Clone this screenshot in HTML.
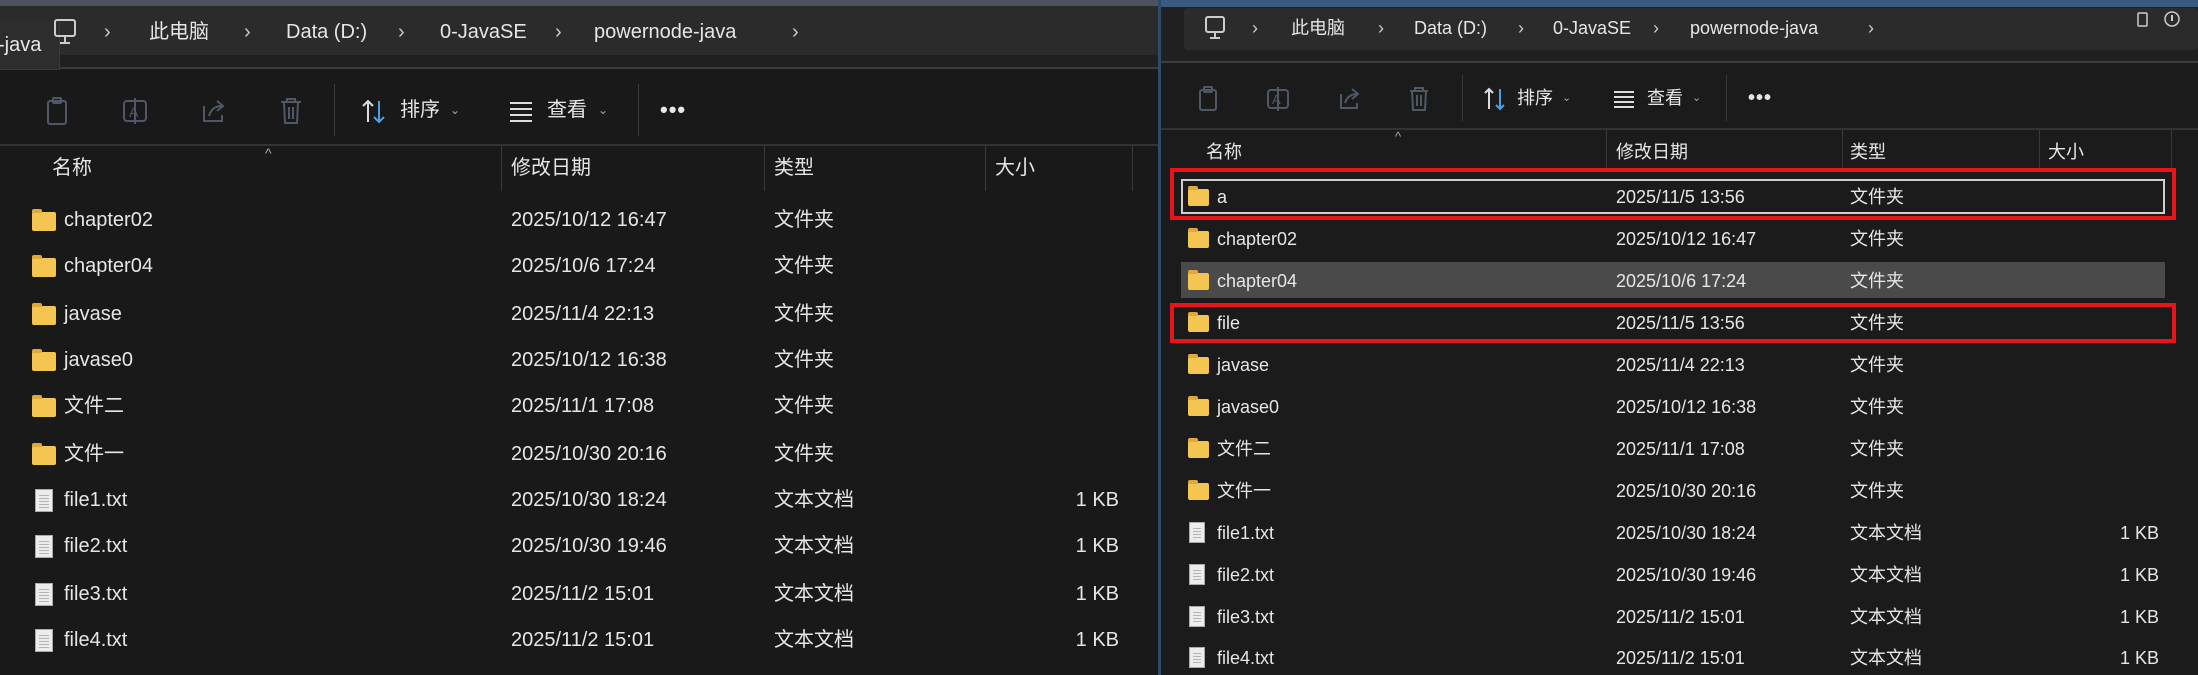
<!DOCTYPE html><html><head><meta charset="utf-8"><style>
*{margin:0;padding:0;box-sizing:border-box}
body{width:2198px;height:675px;background:#191919;position:relative;overflow:hidden;font-family:"Liberation Sans","Noto Sans CJK SC",sans-serif;color:#e6e6e6}
.a{position:absolute;white-space:nowrap}
.L{font-size:20px}.R{font-size:18px}
.t{transform:translateY(-50%);line-height:26px;height:26px}
.fold{position:absolute;width:24px;height:19px;background:#f4c550;border-radius:2px}
.fold:before{content:"";position:absolute;left:0;top:-3px;width:10px;height:4px;background:#e2a93a;border-radius:2px 2px 0 0}
.file{position:absolute;width:18px;height:23px;background:#ececec;border:1px solid #aaa}
.file:after{content:"";position:absolute;left:3px;right:3px;top:3px;bottom:3px;background:repeating-linear-gradient(#ececec 0 2px,#b5b5b5 2px 3px)}
.sep{position:absolute;width:1px;background:#3a3a3a}
</style></head><body>
<!-- LEFT PANE -->
<div class="a" style="left:0;top:0;width:1158px;height:6px;background:#4b5360"></div>
<div class="a" style="left:0;top:6px;width:1158px;height:49px;background:#2b2b2b"></div>
<div class="a" style="left:0;top:55px;width:1158px;height:13px;background:#202020"></div>
<div class="a" style="left:0;top:67px;width:1158px;height:2px;background:#3c3c3c"></div>
<div class="a" style="left:0;top:144px;width:1158px;height:2px;background:#333"></div>
<div class="a" style="left:0;top:20px;width:60px;height:50px;background:#2d2d2d;border-right:1px solid #3a3a3a;border-bottom:1px solid #3a3a3a"></div>
<div class="a L t" style="left:-2px;top:45px;">-java</div>
<svg class="a" style="left:52px;top:18px" width="26" height="28"><rect x="3" y="2" width="20" height="16" rx="2" fill="none" stroke="#ccc" stroke-width="2"/><path d="M13 18v6M8 25h10" stroke="#ccc" stroke-width="2"/></svg>
<div class="a L t" style="left:104px;top:32px;color:#ccc">›</div>
<div class="a L t" style="left:149px;top:32px">此电脑</div>
<div class="a L t" style="left:244px;top:32px;color:#ccc">›</div>
<div class="a L t" style="left:286px;top:32px">Data (D:)</div>
<div class="a L t" style="left:398px;top:32px;color:#ccc">›</div>
<div class="a L t" style="left:440px;top:32px">0-JavaSE</div>
<div class="a L t" style="left:555px;top:32px;color:#ccc">›</div>
<div class="a L t" style="left:594px;top:32px">powernode-java</div>
<div class="a L t" style="left:792px;top:32px;color:#ccc">›</div>
<!-- toolbar left -->
<svg class="a" style="left:44px;top:96px" width="26" height="30"><rect x="4" y="5" width="18" height="23" rx="2" fill="none" stroke="#4f5866" stroke-width="2"/><rect x="9" y="2" width="8" height="5" rx="1" fill="none" stroke="#4f5866" stroke-width="2"/></svg>
<svg class="a" style="left:121px;top:96px" width="28" height="30"><rect x="3" y="5" width="22" height="20" rx="3" fill="none" stroke="#4f5866" stroke-width="2"/><text x="8" y="21" font-size="14" fill="#4f5866">A</text><path d="M14 2v26" stroke="#4f5866" stroke-width="2"/></svg>
<svg class="a" style="left:200px;top:96px" width="28" height="30"><path d="M4 10v15h18v-6M9 20c2-7 7-10 13-10M17 5l6 5-6 5" fill="none" stroke="#4f5866" stroke-width="2"/></svg>
<svg class="a" style="left:278px;top:96px" width="26" height="30"><path d="M3 6h20M9 6V3h8v3M6 6l1 21h12l1-21M11 11v12M15 11v12" fill="none" stroke="#4f5866" stroke-width="2"/></svg>
<div class="sep" style="left:334px;top:84px;height:52px"></div>
<svg class="a" style="left:360px;top:98px" width="28" height="28"><path d="M8 24V3M3 8l5-5 5 5" fill="none" stroke="#ddd" stroke-width="2"/><path d="M19 3v21M14 19l5 5 5-5" fill="none" stroke="#4aa3e0" stroke-width="2"/></svg>
<div class="a L t" style="left:400px;top:110px">排序</div>
<div class="a t" style="left:450px;top:110px;font-size:12px;color:#aaa">⌄</div>
<svg class="a" style="left:508px;top:100px" width="26" height="22"><path d="M2 3h22M2 9h22M2 15h22M2 21h22" stroke="#ddd" stroke-width="2"/></svg>
<div class="a L t" style="left:547px;top:110px">查看</div>
<div class="a t" style="left:598px;top:110px;font-size:12px;color:#aaa">⌄</div>
<div class="sep" style="left:638px;top:84px;height:52px"></div>
<div class="a t" style="left:660px;top:110px;font-size:22px;font-weight:bold;letter-spacing:1px">•••</div>
<!-- header left -->
<div class="a t" style="left:265px;top:153px;font-size:14px;color:#aaa">^</div>
<div class="a L t" style="left:52px;top:168px">名称</div>
<div class="sep" style="left:501px;top:146px;height:45px"></div>
<div class="a L t" style="left:511px;top:168px">修改日期</div>
<div class="sep" style="left:764px;top:146px;height:45px"></div>
<div class="a L t" style="left:774px;top:168px">类型</div>
<div class="sep" style="left:985px;top:146px;height:45px"></div>
<div class="a L t" style="left:995px;top:168px">大小</div>
<div class="sep" style="left:1132px;top:146px;height:45px"></div>
<!-- rows left -->
<div class="fold" style="left:32px;top:212px"></div><div class="a L t" style="left:64px;top:220px">chapter02</div><div class="a L t" style="left:511px;top:220px">2025/10/12 16:47</div><div class="a L t" style="left:774px;top:220px">文件夹</div>
<div class="fold" style="left:32px;top:258px"></div><div class="a L t" style="left:64px;top:266px">chapter04</div><div class="a L t" style="left:511px;top:266px">2025/10/6 17:24</div><div class="a L t" style="left:774px;top:266px">文件夹</div>
<div class="fold" style="left:32px;top:306px"></div><div class="a L t" style="left:64px;top:314px">javase</div><div class="a L t" style="left:511px;top:314px">2025/11/4 22:13</div><div class="a L t" style="left:774px;top:314px">文件夹</div>
<div class="fold" style="left:32px;top:352px"></div><div class="a L t" style="left:64px;top:360px">javase0</div><div class="a L t" style="left:511px;top:360px">2025/10/12 16:38</div><div class="a L t" style="left:774px;top:360px">文件夹</div>
<div class="fold" style="left:32px;top:398px"></div><div class="a L t" style="left:64px;top:406px">文件二</div><div class="a L t" style="left:511px;top:406px">2025/11/1 17:08</div><div class="a L t" style="left:774px;top:406px">文件夹</div>
<div class="fold" style="left:32px;top:446px"></div><div class="a L t" style="left:64px;top:454px">文件一</div><div class="a L t" style="left:511px;top:454px">2025/10/30 20:16</div><div class="a L t" style="left:774px;top:454px">文件夹</div>
<div class="file" style="left:35px;top:489px"></div><div class="a L t" style="left:64px;top:500px">file1.txt</div><div class="a L t" style="left:511px;top:500px">2025/10/30 18:24</div><div class="a L t" style="left:774px;top:500px">文本文档</div><div class="a L t" style="right:1079px;top:500px">1 KB</div>
<div class="file" style="left:35px;top:535px"></div><div class="a L t" style="left:64px;top:546px">file2.txt</div><div class="a L t" style="left:511px;top:546px">2025/10/30 19:46</div><div class="a L t" style="left:774px;top:546px">文本文档</div><div class="a L t" style="right:1079px;top:546px">1 KB</div>
<div class="file" style="left:35px;top:583px"></div><div class="a L t" style="left:64px;top:594px">file3.txt</div><div class="a L t" style="left:511px;top:594px">2025/11/2 15:01</div><div class="a L t" style="left:774px;top:594px">文本文档</div><div class="a L t" style="right:1079px;top:594px">1 KB</div>
<div class="file" style="left:35px;top:629px"></div><div class="a L t" style="left:64px;top:640px">file4.txt</div><div class="a L t" style="left:511px;top:640px">2025/11/2 15:01</div><div class="a L t" style="left:774px;top:640px">文本文档</div><div class="a L t" style="right:1079px;top:640px">1 KB</div>

<!-- RIGHT PANE -->
<div class="a" style="left:1158px;top:0;width:3px;height:675px;background:#2f4a6a"></div>
<div class="a" style="left:1161px;top:0;width:1037px;height:675px;background:#1b1b1b"></div>
<div class="a" style="left:1161px;top:0;width:1037px;height:7px;background:#3b5a80"></div>
<div class="a" style="left:1161px;top:7px;width:1037px;height:55px;background:#202020"></div>
<div class="a" style="left:1184px;top:8px;width:1014px;height:42px;background:#2b2b2b;border-radius:4px"></div>
<div class="a" style="left:1161px;top:61px;width:1037px;height:2px;background:#3c3c3c"></div>
<div class="a" style="left:1161px;top:128px;width:1037px;height:2px;background:#333"></div>
<svg class="a" style="left:1203px;top:15px" width="24" height="26"><rect x="3" y="2" width="18" height="15" rx="2" fill="none" stroke="#ccc" stroke-width="2"/><path d="M12 17v5M7 23h10" stroke="#ccc" stroke-width="2"/></svg>
<div class="a R t" style="left:1252px;top:28px;color:#ccc">›</div>
<div class="a R t" style="left:1291px;top:28px">此电脑</div>
<div class="a R t" style="left:1378px;top:28px;color:#ccc">›</div>
<div class="a R t" style="left:1414px;top:28px">Data (D:)</div>
<div class="a R t" style="left:1518px;top:28px;color:#ccc">›</div>
<div class="a R t" style="left:1553px;top:28px">0-JavaSE</div>
<div class="a R t" style="left:1653px;top:28px;color:#ccc">›</div>
<div class="a R t" style="left:1690px;top:28px">powernode-java</div>
<div class="a R t" style="left:1868px;top:28px;color:#ccc">›</div>
<svg class="a" style="left:2135px;top:10px" width="16" height="18"><rect x="3" y="3" width="9" height="13" rx="1" fill="none" stroke="#ccc" stroke-width="1.5"/></svg>
<svg class="a" style="left:2163px;top:10px" width="18" height="18"><circle cx="9" cy="9" r="7" fill="none" stroke="#ccc" stroke-width="1.5"/><path d="M9 5v6" stroke="#ccc" stroke-width="2"/></svg>
<!-- toolbar right -->
<svg class="a" style="left:1196px;top:85px" width="24" height="28"><rect x="4" y="5" width="16" height="20" rx="2" fill="none" stroke="#4f5866" stroke-width="2"/><rect x="8" y="2" width="8" height="5" rx="1" fill="none" stroke="#4f5866" stroke-width="2"/></svg>
<svg class="a" style="left:1265px;top:85px" width="26" height="28"><rect x="3" y="5" width="20" height="18" rx="3" fill="none" stroke="#4f5866" stroke-width="2"/><text x="7" y="19" font-size="13" fill="#4f5866">A</text><path d="M13 2v24" stroke="#4f5866" stroke-width="2"/></svg>
<svg class="a" style="left:1337px;top:85px" width="26" height="28"><path d="M4 9v14h16v-5M8 18c2-6 6-9 12-9M15 4l6 5-6 5" fill="none" stroke="#4f5866" stroke-width="2"/></svg>
<svg class="a" style="left:1407px;top:85px" width="24" height="28"><path d="M3 6h18M8 6V3h8v3M5 6l1 19h12l1-19M10 10v11M14 10v11" fill="none" stroke="#4f5866" stroke-width="2"/></svg>
<div class="sep" style="left:1462px;top:75px;height:46px"></div>
<svg class="a" style="left:1482px;top:86px" width="26" height="26"><path d="M7 23V3M3 7l4-4 4 4" fill="none" stroke="#ddd" stroke-width="2"/><path d="M18 3v20M14 19l4 4 4-4" fill="none" stroke="#4aa3e0" stroke-width="2"/></svg>
<div class="a R t" style="left:1517px;top:98px">排序</div>
<div class="a t" style="left:1562px;top:98px;font-size:11px;color:#aaa">⌄</div>
<svg class="a" style="left:1612px;top:89px" width="24" height="20"><path d="M2 3h20M2 8h20M2 13h20M2 18h20" stroke="#ddd" stroke-width="2"/></svg>
<div class="a R t" style="left:1647px;top:98px">查看</div>
<div class="a t" style="left:1692px;top:98px;font-size:11px;color:#aaa">⌄</div>
<div class="sep" style="left:1726px;top:75px;height:46px"></div>
<div class="a t" style="left:1748px;top:98px;font-size:20px;font-weight:bold;letter-spacing:1px">•••</div>
<!-- header right -->
<div class="a t" style="left:1395px;top:137px;font-size:13px;color:#aaa">^</div>
<div class="a R t" style="left:1206px;top:152px">名称</div>
<div class="sep" style="left:1606px;top:130px;height:38px"></div>
<div class="a R t" style="left:1616px;top:152px">修改日期</div>
<div class="sep" style="left:1842px;top:130px;height:38px"></div>
<div class="a R t" style="left:1850px;top:152px">类型</div>
<div class="sep" style="left:2039px;top:130px;height:38px"></div>
<div class="a R t" style="left:2048px;top:152px">大小</div>
<div class="sep" style="left:2171px;top:130px;height:38px"></div>
<!-- selections -->
<div class="a" style="left:1181px;top:179px;width:984px;height:35px;border:2px solid #cfcfcf"></div>
<div class="a" style="left:1181px;top:262px;width:984px;height:36px;background:#4a4a4a"></div>
<div class="a" style="left:1170px;top:168px;width:1006px;height:52px;border:4px solid #e8141c"></div>
<div class="a" style="left:1170px;top:303px;width:1006px;height:40px;border:4px solid #e8141c"></div>
<!-- rows right -->
<div class="fold" style="left:1188px;top:189px;width:21px;height:17px"></div><div class="a R t" style="left:1217px;top:197px">a</div><div class="a R t" style="left:1616px;top:197px">2025/11/5 13:56</div><div class="a R t" style="left:1850px;top:197px">文件夹</div>
<div class="fold" style="left:1188px;top:231px;width:21px;height:17px"></div><div class="a R t" style="left:1217px;top:239px">chapter02</div><div class="a R t" style="left:1616px;top:239px">2025/10/12 16:47</div><div class="a R t" style="left:1850px;top:239px">文件夹</div>
<div class="fold" style="left:1188px;top:273px;width:21px;height:17px"></div><div class="a R t" style="left:1217px;top:281px">chapter04</div><div class="a R t" style="left:1616px;top:281px">2025/10/6 17:24</div><div class="a R t" style="left:1850px;top:281px">文件夹</div>
<div class="fold" style="left:1188px;top:315px;width:21px;height:17px"></div><div class="a R t" style="left:1217px;top:323px">file</div><div class="a R t" style="left:1616px;top:323px">2025/11/5 13:56</div><div class="a R t" style="left:1850px;top:323px">文件夹</div>
<div class="fold" style="left:1188px;top:357px;width:21px;height:17px"></div><div class="a R t" style="left:1217px;top:365px">javase</div><div class="a R t" style="left:1616px;top:365px">2025/11/4 22:13</div><div class="a R t" style="left:1850px;top:365px">文件夹</div>
<div class="fold" style="left:1188px;top:399px;width:21px;height:17px"></div><div class="a R t" style="left:1217px;top:407px">javase0</div><div class="a R t" style="left:1616px;top:407px">2025/10/12 16:38</div><div class="a R t" style="left:1850px;top:407px">文件夹</div>
<div class="fold" style="left:1188px;top:441px;width:21px;height:17px"></div><div class="a R t" style="left:1217px;top:449px">文件二</div><div class="a R t" style="left:1616px;top:449px">2025/11/1 17:08</div><div class="a R t" style="left:1850px;top:449px">文件夹</div>
<div class="fold" style="left:1188px;top:483px;width:21px;height:17px"></div><div class="a R t" style="left:1217px;top:491px">文件一</div><div class="a R t" style="left:1616px;top:491px">2025/10/30 20:16</div><div class="a R t" style="left:1850px;top:491px">文件夹</div>
<div class="file" style="left:1189px;top:522px;width:16px;height:21px"></div><div class="a R t" style="left:1217px;top:533px">file1.txt</div><div class="a R t" style="left:1616px;top:533px">2025/10/30 18:24</div><div class="a R t" style="left:1850px;top:533px">文本文档</div><div class="a R t" style="right:39px;top:533px">1 KB</div>
<div class="file" style="left:1189px;top:564px;width:16px;height:21px"></div><div class="a R t" style="left:1217px;top:575px">file2.txt</div><div class="a R t" style="left:1616px;top:575px">2025/10/30 19:46</div><div class="a R t" style="left:1850px;top:575px">文本文档</div><div class="a R t" style="right:39px;top:575px">1 KB</div>
<div class="file" style="left:1189px;top:606px;width:16px;height:21px"></div><div class="a R t" style="left:1217px;top:617px">file3.txt</div><div class="a R t" style="left:1616px;top:617px">2025/11/2 15:01</div><div class="a R t" style="left:1850px;top:617px">文本文档</div><div class="a R t" style="right:39px;top:617px">1 KB</div>
<div class="file" style="left:1189px;top:647px;width:16px;height:21px"></div><div class="a R t" style="left:1217px;top:658px">file4.txt</div><div class="a R t" style="left:1616px;top:658px">2025/11/2 15:01</div><div class="a R t" style="left:1850px;top:658px">文本文档</div><div class="a R t" style="right:39px;top:658px">1 KB</div>
</body></html>
